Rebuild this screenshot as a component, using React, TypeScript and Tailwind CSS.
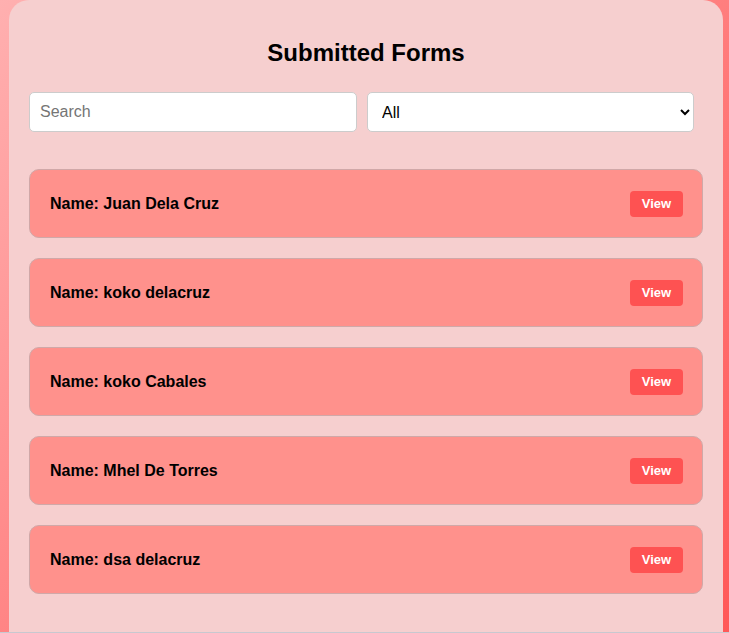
import React from "react";

const names = [
  "Juan Dela Cruz",
  "koko delacruz",
  "koko Cabales",
  "Mhel De Torres",
  "dsa delacruz",
];

export default function App() {
  return (
    <div
      className="h-[633px] w-full overflow-hidden bg-[linear-gradient(135deg,#ffb0b0_0%,#ff7878_60%,#ff5858_100%)] border-b border-[#c8c8d0]"
      style={{ fontFamily: '"Liberation Sans", Arial, sans-serif' }}
    >
      <div className="mx-[9px] w-[714px] h-[700px] rounded-t-[20px] bg-[#f6cfcf] px-[20px] pt-[39px]">
        <h2 className="text-center text-[24px] leading-[28px] font-bold text-black">
          Submitted Forms
        </h2>
        <div className="mt-[25px] flex gap-[10px]">
          <input
            type="text"
            placeholder="Search"
            className="h-[40px] w-[328px] rounded-[5px] border border-[#cccccc] bg-white px-[10px] text-[16px] text-black placeholder:text-[#757575] outline-none"
          />
          <select className="h-[40px] w-[327px] rounded-[5px] border border-[#cccccc] bg-white px-[10px] text-[16px] text-black outline-none">
            <option>All</option>
          </select>
        </div>
        <div className="mt-[37px] flex flex-col gap-[20px]">
          {names.map((n) => (
            <div
              key={n}
              className="flex h-[69px] items-center justify-between rounded-[10px] border border-[#d0a8a8] bg-[#ff918c] pl-[20px] pr-[19px]"
            >
              <span className="text-[16px] font-bold text-black">Name: {n}</span>
              <button className="h-[26px] w-[53px] rounded-[4px] bg-[#fe5252] text-[13px] font-bold text-white">
                View
              </button>
            </div>
          ))}
        </div>
      </div>
    </div>
  );
}
